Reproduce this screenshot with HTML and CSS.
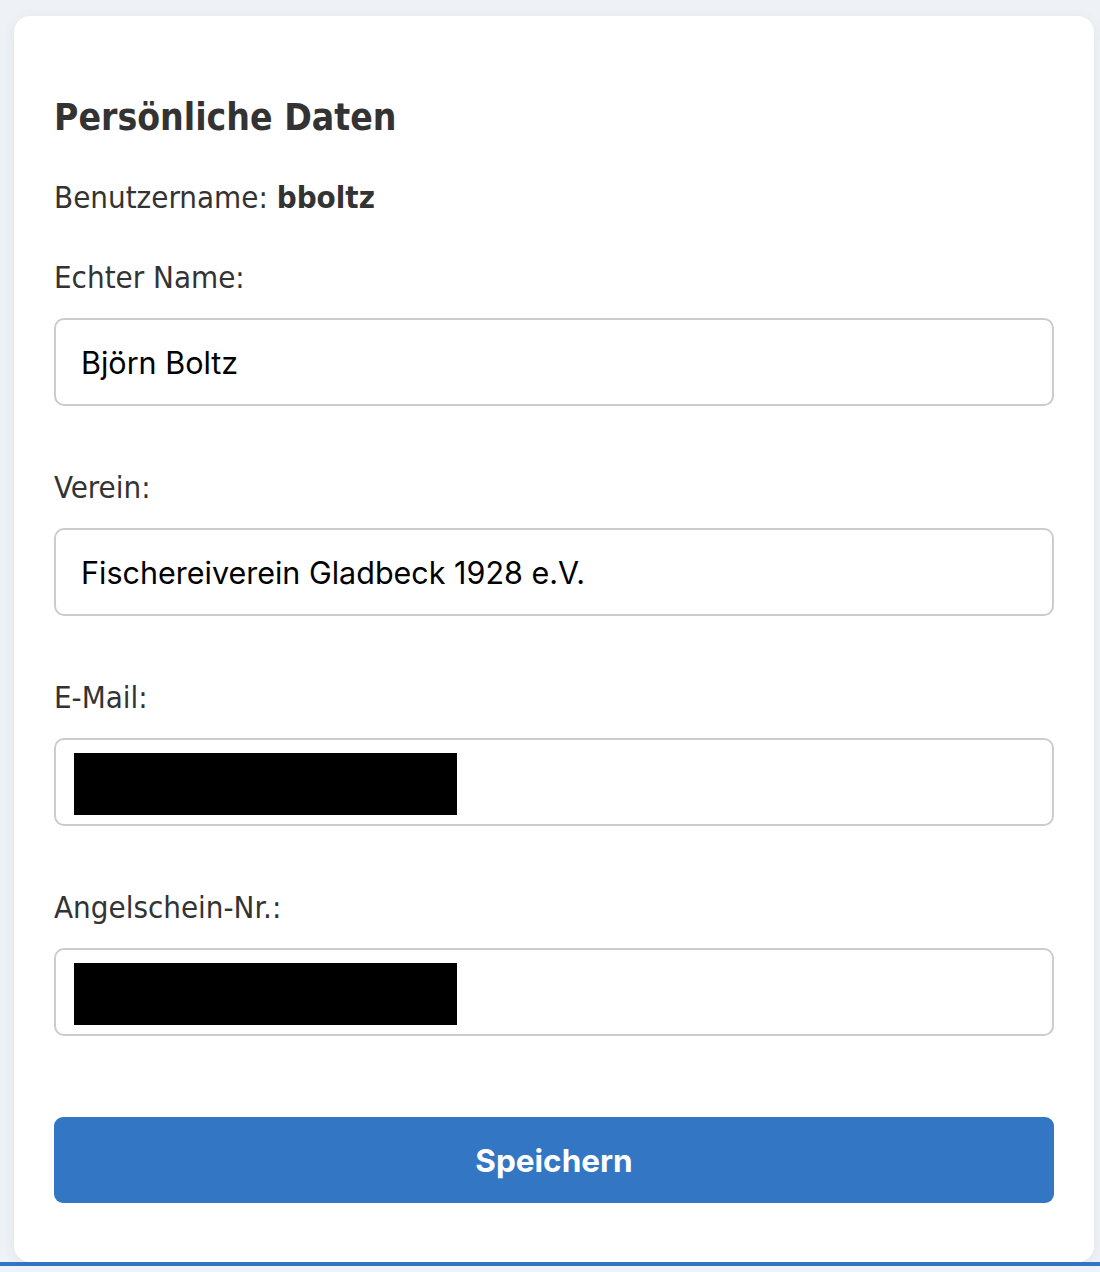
FILE: index.html
```html
<!DOCTYPE html>
<html lang="de">
<head>
  <meta charset="UTF-8">
  <meta name="viewport" content="width=device-width, initial-scale=1.0">
  <title>Persönliche Daten</title>
  <link rel="stylesheet" href="styles.css">
</head>
<body>

<div class="page">
  <form class="card" onsubmit="return false">
    <h2>Persönliche Daten</h2>
    <p class="username">Benutzername: <strong>bboltz</strong></p>

    <label for="realName">Echter Name:</label>
    <div class="field">
      <input type="text" id="realName" value="Björn Boltz">
    </div>

    <label for="club">Verein:</label>
    <div class="field">
      <input type="text" id="club" value="Fischereiverein Gladbeck 1928 e.V.">
    </div>

    <label for="email">E-Mail:</label>
    <div class="field">
      <input type="email" id="email" value="">
      <span class="redacted"></span>
    </div>

    <label for="license">Angelschein-Nr.:</label>
    <div class="field">
      <input type="text" id="license" value="">
      <span class="redacted"></span>
    </div>

    <button type="submit">Speichern</button>
  </form>
</div>

</body>
</html>
```

FILE: styles.css
```css
body {
  margin: 0;
  padding: 0;
  background-color: #eef2f6;
  font-family: "DejaVu Sans Condensed", "DejaVu Sans", sans-serif;
  color: #333333;
}

.page {
  box-sizing: border-box;
  padding: 16px 6px 0 14px;
  border-bottom: 4px solid #3375c6;
  height: 1266px;
}

.card {
  background-color: #ffffff;
  border-radius: 16px;
  box-shadow: 0 2px 12px rgba(60, 80, 110, 0.08);
  padding: 73px 40px 0;
  height: 1246px;
  box-sizing: border-box;
  display: flex;
  flex-direction: column;
}

.card h2 {
  margin: 0;
  font-size: 37px;
  line-height: 58px;
  font-weight: bold;
}

.username {
  margin: 30px 0 0;
  font-size: 31px;
  line-height: 40px;
}

.card label {
  display: block;
  margin-top: 40px;
  font-size: 31px;
  line-height: 40px;
}

.card label + .field {
  margin-top: 21px;
}

.field {
  position: relative;
}

.field + label {
  margin-top: 61px;
}

.field input {
  display: block;
  width: 100%;
  box-sizing: border-box;
  height: 88px;
  padding: 0 25px;
  border: 2px solid #cccccc;
  border-radius: 10px;
  font-family: Inter, "Liberation Sans", sans-serif;
  font-size: 30.5px;
  color: #000000;
  background: #ffffff;
  outline: none;
}

.redacted {
  position: absolute;
  left: 20px;
  top: 15px;
  width: 383px;
  height: 62px;
  background: #000000;
}

.card button {
  margin-top: 81px;
  height: 86px;
  border: none;
  border-radius: 9px;
  background-color: #3276c4;
  color: #ffffff;
  font-family: Inter, "Liberation Sans", sans-serif;
  font-weight: bold;
  font-size: 31.5px;
  cursor: pointer;
}
```
